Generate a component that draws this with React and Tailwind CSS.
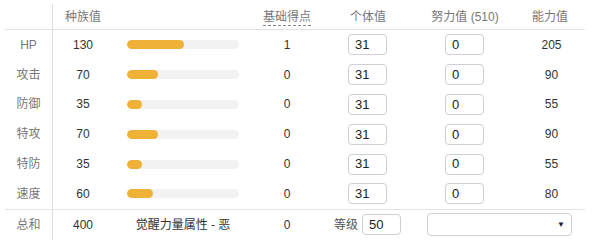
const stats = [
  { name: 'HP', base: 130, ev: 0, iv: 31, pts: 1, total: 205 },
  { name: '攻击', base: 70, ev: 0, iv: 31, pts: 0, total: 90 },
  { name: '防御', base: 35, ev: 0, iv: 31, pts: 0, total: 55 },
  { name: '特攻', base: 70, ev: 0, iv: 31, pts: 0, total: 90 },
  { name: '特防', base: 35, ev: 0, iv: 31, pts: 0, total: 55 },
  { name: '速度', base: 60, ev: 0, iv: 31, pts: 0, total: 80 },
]

const cols = 'grid grid-cols-[48px_60px_140px_68px_94px_100px_70px]'

const Box = ({ value, w = 'w-[39px]' }) => (
  <div
    className={`${w} h-[21px] border border-[#cfcfd4] rounded-[4px] bg-white flex items-center pl-[6px] text-[13px] text-[#222]`}
  >
    {value}
  </div>
)

const App = () => {
  return (
    <div className="w-[600px] h-[243px] bg-white pt-[4px] pl-[5px] font-['Liberation_Sans','Noto_Sans_CJK_SC',sans-serif] text-[12px]">
      <div className="w-[580px]">
        <div className={`${cols} h-[26px] border-b border-[#e2e2e8] text-[#777] items-center`}>
          <div className="h-full border-r border-[#dcdce4]"></div>
          <div className="text-center pt-[1px]">种族值</div>
          <div></div>
          <div className="text-center pt-[1px]">
            <span className="border-b border-dashed border-[#888] pb-[1px]">基础得点</span>
          </div>
          <div className="text-center pt-[1px]">个体值</div>
          <div className="text-center pt-[1px]">努力值 (510)</div>
          <div className="text-center pt-[1px]">能力值</div>
        </div>
        <div className="border-b border-[#e2e2e8]">
          {stats.map((s) => (
            <div key={s.name} className={`${cols} h-[29.8px] items-center`}>
              <div className="h-full border-r border-[#dcdce4] flex items-center justify-center text-[#777]">
                {s.name}
              </div>
              <div className="text-center text-[#333]">{s.base}</div>
              <div className="px-[14px]">
                <div className="h-[9px] rounded-full bg-[#f2f2f2] overflow-hidden">
                  <div
                    className="h-full rounded-full bg-[#efb237]"
                    style={{ width: `${(s.base / 255) * 100}%` }}
                  ></div>
                </div>
              </div>
              <div className="text-center text-[#333]">{s.pts}</div>
              <div className="flex justify-center pr-[1px]">
                <Box value={s.iv} />
              </div>
              <div className="flex justify-center pr-[1px]">
                <Box value={s.ev} />
              </div>
              <div className="text-center text-[#333] pl-[3px]">{s.total}</div>
            </div>
          ))}
        </div>
        <div className={`${cols} h-[30px] items-center`}>
          <div className="h-full border-r border-[#dcdce4] flex items-center justify-center text-[#777]">
            总和
          </div>
          <div className="text-center text-[#333]">400</div>
          <div className="text-center text-[#333]">觉醒力量属性 - 恶</div>
          <div className="text-center text-[#333]">0</div>
          <div className="flex justify-center items-center gap-[4px] pr-[1px]">
            <span className="text-[#555]">等级</span>
            <Box value={50} />
          </div>
          <div className="col-span-2 pl-[12px] pr-[13px]">
            <div className="h-[23px] border border-[#cfcfd4] rounded-[4px] bg-white flex items-center justify-end pr-[6px] text-[8px] text-[#222]">
              ▼
            </div>
          </div>
        </div>
      </div>
    </div>
  )
}

export default App
